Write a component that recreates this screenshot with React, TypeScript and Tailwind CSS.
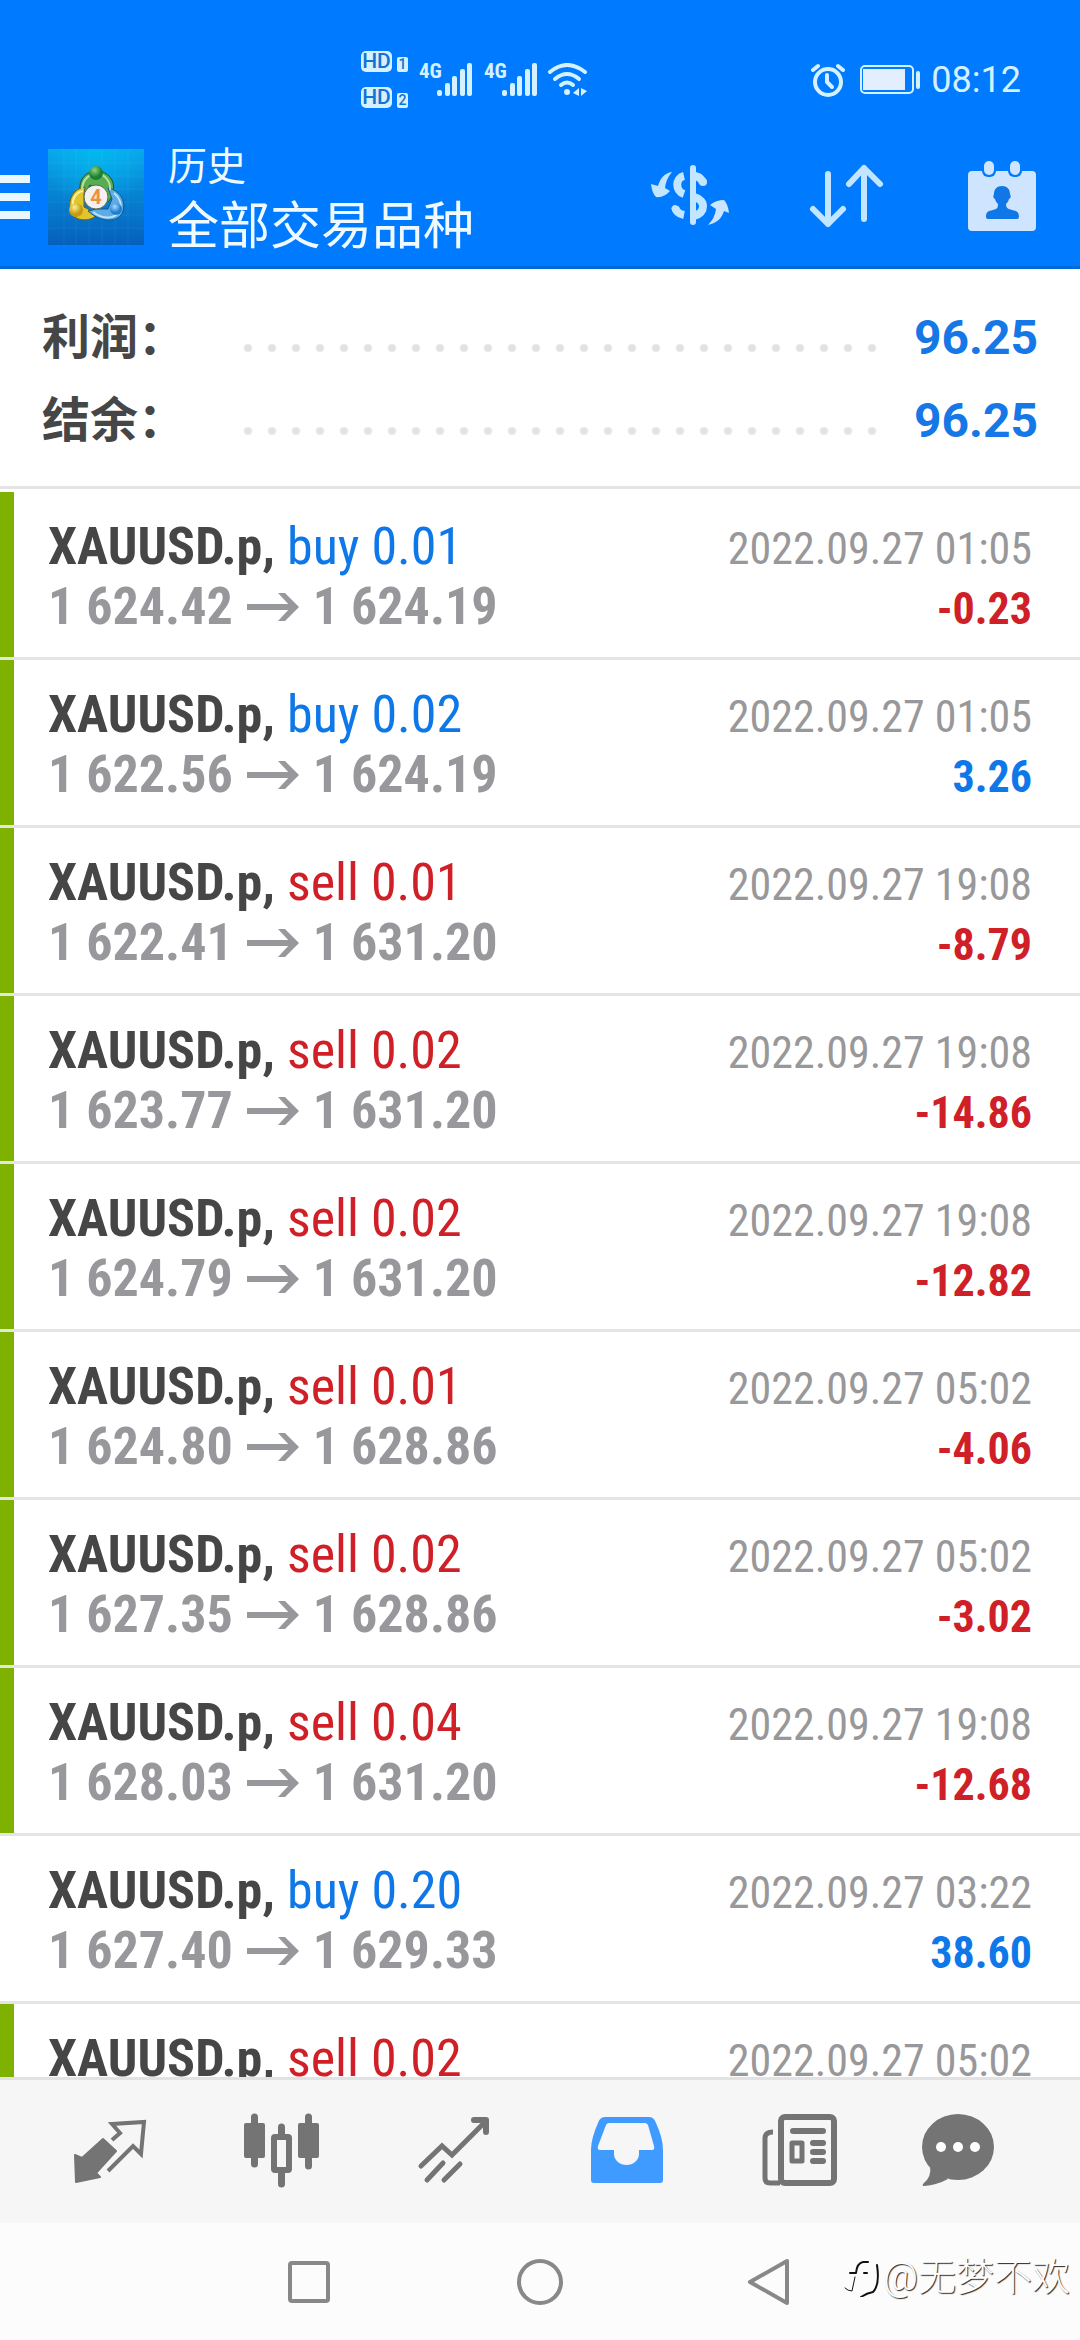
import React from 'react';

interface Deal {
  symbol: string;
  side: 'buy' | 'sell';
  volume: string;
  open: string;
  close: string;
  time: string;
  profit: string;
  marked: boolean;
}

const deals: Deal[] = [
  { symbol: 'XAUUSD.p', side: 'buy', volume: '0.01', open: '1 624.42', close: '1 624.19', time: '2022.09.27 01:05', profit: '-0.23', marked: true },
  { symbol: 'XAUUSD.p', side: 'buy', volume: '0.02', open: '1 622.56', close: '1 624.19', time: '2022.09.27 01:05', profit: '3.26', marked: true },
  { symbol: 'XAUUSD.p', side: 'sell', volume: '0.01', open: '1 622.41', close: '1 631.20', time: '2022.09.27 19:08', profit: '-8.79', marked: true },
  { symbol: 'XAUUSD.p', side: 'sell', volume: '0.02', open: '1 623.77', close: '1 631.20', time: '2022.09.27 19:08', profit: '-14.86', marked: true },
  { symbol: 'XAUUSD.p', side: 'sell', volume: '0.02', open: '1 624.79', close: '1 631.20', time: '2022.09.27 19:08', profit: '-12.82', marked: true },
  { symbol: 'XAUUSD.p', side: 'sell', volume: '0.01', open: '1 624.80', close: '1 628.86', time: '2022.09.27 05:02', profit: '-4.06', marked: true },
  { symbol: 'XAUUSD.p', side: 'sell', volume: '0.02', open: '1 627.35', close: '1 628.86', time: '2022.09.27 05:02', profit: '-3.02', marked: true },
  { symbol: 'XAUUSD.p', side: 'sell', volume: '0.04', open: '1 628.03', close: '1 631.20', time: '2022.09.27 19:08', profit: '-12.68', marked: true },
  { symbol: 'XAUUSD.p', side: 'buy', volume: '0.20', open: '1 627.40', close: '1 629.33', time: '2022.09.27 03:22', profit: '38.60', marked: false },
  { symbol: 'XAUUSD.p', side: 'sell', volume: '0.02', open: '1 627.35', close: '1 628.86', time: '2022.09.27 05:02', profit: '-3.02', marked: true },
];

const summary = [
  { label: '利润', value: '96.25' },
  { label: '结余', value: '96.25' },
];

export default function App() {
  return (
    <div className="h-screen flex flex-col bg-white font-['Roboto','Noto_Sans_CJK_SC',sans-serif]">
      <header className="shrink-0 bg-[#007aff] border-b-3 border-[#0069dc]">
        <StatusBar />
        <TitleBar />
      </header>

      <main className="flex-1 min-h-0 overflow-hidden">
        {/* 汇总 */}
        <dl className="h-[220px] pt-[27px] border-b-3 border-[#e4e4e4] mb-[3px]">
          {summary.map(item => (
            <div key={item.label} className="flex items-center h-[83px] px-[42px] text-[48px] leading-[83px] font-bold">
              <dt className="w-[194px] text-[#464646]">{item.label}：</dt>
              <dd className="flex-1 flex items-center justify-between text-[#1677e6]">
                <span className="w-[648px] h-2 mt-5 bg-[radial-gradient(circle,#e2e2e2_3px,transparent_5px)] bg-[length:24px_8px]" />
                {item.value}
              </dd>
            </div>
          ))}
        </dl>

        {/* 成交列表 */}
        <ul>
          {deals.map((deal, i) => (
            <DealRow key={i} deal={deal} />
          ))}
        </ul>
      </main>

      <TabBar />
      <SystemNav />
    </div>
  );
}

function StatusBar() {
  return (
    <div className="flex items-center justify-between pt-[51px] pl-[361px] pr-[59px] text-[#d5f1ff]">
      <div className="flex items-center">
        <div className="flex flex-col gap-[15px]">
          <HdBadge slot="1" />
          <HdBadge slot="2" />
        </div>
        <Signal />
        <Signal />
        <svg className="w-10 h-[34px] ml-[10px]" viewBox="0 0 40 34" fill="none" stroke="currentColor" strokeLinecap="round">
          <path d="M2 9Q19 -5 37 9" strokeWidth="4" />
          <path d="M7 16Q19 6 31 16" strokeWidth="4" />
          <path d="M13 22Q19 17 25 22" strokeWidth="4" />
          <circle cx="19" cy="29" r="3" fill="currentColor" stroke="none" />
          <path d="M31 25V33L25 30ZM33 25V33L39 28Z" fill="currentColor" stroke="none" />
        </svg>
      </div>
      <div className="flex items-center">
        <svg className="w-[34px] h-[34px]" viewBox="0 0 34 34" fill="none" stroke="currentColor" strokeLinecap="round">
          <circle cx="17" cy="19" r="13" strokeWidth="4" />
          <path d="M16 12V19L21 24" strokeWidth="4" strokeLinejoin="round" />
          <path d="M2 7L7 3M27 3L32 7" strokeWidth="4" />
        </svg>
        <svg className="w-[60px] h-[30px] ml-[15px]" viewBox="0 0 60 30" fill="none">
          <rect x="1" y="1" width="52" height="27" rx="4" stroke="currentColor" strokeWidth="2" />
          <rect x="3" y="4" width="42" height="21" fill="#e3efff" />
          <rect x="56" y="6" width="4" height="18" rx="2" fill="currentColor" />
        </svg>
        <span className="ml-[11px] text-[36px] leading-[40px]">08:12</span>
      </div>
    </div>
  );
}

function HdBadge({ slot }: { slot: string }) {
  return (
    <div className="flex items-end gap-[5px] font-medium text-[#1272d8]">
      <span className="w-[31px] h-[21px] rounded-[5px] bg-[#d5f1ff] text-center text-[21px] leading-[21px]">HD</span>
      <span className="w-[11px] h-[15px] rounded-[2px] bg-[#d5f1ff] text-center text-[14px] leading-[15px]">{slot}</span>
    </div>
  );
}

function Signal() {
  return (
    <div className="flex items-start w-[54px] ml-[11px]">
      <span className="w-[18px] font-['Roboto_Condensed','Roboto',sans-serif] font-bold text-[21px] leading-4">4G</span>
      <svg className="w-[36px] h-[34px]" viewBox="0 0 36 34" fill="currentColor">
        <rect x="0" y="27" width="5" height="6" rx="2" />
        <rect x="8" y="20" width="5" height="13" rx="2" />
        <rect x="15" y="13" width="5" height="20" rx="2" />
        <rect x="23" y="6" width="5" height="27" rx="2" />
        <rect x="30" y="0" width="5" height="33" rx="2" />
      </svg>
    </div>
  );
}

function TitleBar() {
  return (
    <div className="flex items-center pt-[41px] pb-[21px] text-[#eefaff]">
      <button aria-label="菜单" className="flex flex-col gap-[10px] w-[30px] mr-[18px]">
        <span className="w-full h-2 bg-[#e9f8ff]" />
        <span className="w-full h-2 bg-[#e9f8ff]" />
        <span className="w-full h-2 bg-[#e9f8ff]" />
      </button>
      <AppLogo />
      <div className="ml-6 h-24 flex-1 flex flex-col">
        <h2 className="text-[39px] leading-[36px]">历史</h2>
        <h1 className="text-[51px] leading-[84px]">全部交易品种</h1>
      </div>
      <button aria-label="币种" className="w-[156px] flex justify-center">
        <svg className="w-24 h-24" viewBox="0 0 96 96" fill="none" stroke="#c2e6ff" strokeWidth="8">
          <path d="M51 19V73" strokeWidth="6" strokeLinecap="round" />
          <path d="M42 27C33 29 33 42 42 45" />
          <path d="M33 58C34 63 37 65 42 66" />
          <circle cx="33" cy="59" r="3" fill="#c2e6ff" stroke="none" />
          <path d="M53 27C58 28 60 30 61 34" />
          <circle cx="61" cy="33" r="4" fill="#c2e6ff" stroke="none" />
          <path d="M52 48C64 51 64 63 52 67" />
          <path d="M30 23C22 24 18 30 16 37L9 35Q10 44 14 48Q22 49 28 42L23 39Q24 30 30 23Z" fill="#c2e6ff" stroke="none" />
          <path d="M66 76C75 74 80 69 82 62L87 64Q86 55 82 51Q74 51 68 56L74 60Q73 69 66 76Z" fill="#cbe4ff" stroke="none" />
        </svg>
      </button>
      <button aria-label="排序" className="w-[156px] flex justify-center">
        <svg className="w-24 h-24" viewBox="0 0 96 96" fill="none" stroke="#c2e6ff" strokeWidth="6" strokeLinecap="round" strokeLinejoin="round">
          <path d="M30 25V75M15 60L30 75L45 60" />
          <path d="M66 70V19M51 35L66 19L82 35" />
        </svg>
      </button>
      <button aria-label="周期" className="w-[156px] flex justify-center">
        <svg className="w-24 h-24" viewBox="0 0 96 96" fill="#cfe5ff">
          <rect x="14" y="22" width="68" height="60" rx="4" />
          <rect x="28" y="9" width="14" height="19" rx="6" fill="#007aff" />
          <rect x="54" y="9" width="14" height="19" rx="6" fill="#007aff" />
          <rect x="30" y="12" width="10" height="14" rx="5" />
          <rect x="56" y="12" width="10" height="14" rx="5" />
          <path
            d="M48 37C53 37 56 40 56 45C57 47 57 49 55 50C54 53 53 54 52 55C52 59 54 60 58 61C63 62 65 63 65 68Q65 70 63 70H34Q32 70 32 68C32 63 34 62 39 61C43 60 44 59 44 55C43 54 42 53 41 50C39 49 39 47 40 45C40 40 43 37 48 37Z"
            fill="#0f77e6"
          />
        </svg>
      </button>
    </div>
  );
}

function AppLogo() {
  return (
    <svg className="w-24 h-24" viewBox="0 0 96 96">
      <defs>
        <linearGradient id="sky" x1="0" y1="0" x2="0" y2="1">
          <stop offset="0" stopColor="#0aa5ea" />
          <stop offset="0.5" stopColor="#0681d2" />
          <stop offset="1" stopColor="#0560bd" />
        </linearGradient>
        <radialGradient id="glow" cx="0.5" cy="0" r="0.6">
          <stop offset="0" stopColor="#00bdf2" stopOpacity="0.8" />
          <stop offset="1" stopColor="#00bdf2" stopOpacity="0" />
        </radialGradient>
        <radialGradient id="green" cx="0.4" cy="0.3">
          <stop offset="0" stopColor="#8fd67c" />
          <stop offset="1" stopColor="#1c7f33" />
        </radialGradient>
        <radialGradient id="yellow" cx="0.4" cy="0.3">
          <stop offset="0" stopColor="#fff08a" />
          <stop offset="1" stopColor="#c39a10" />
        </radialGradient>
        <radialGradient id="blue" cx="0.4" cy="0.3">
          <stop offset="0" stopColor="#a6dbff" />
          <stop offset="1" stopColor="#1d7fd0" />
        </radialGradient>
      </defs>
      <rect width="96" height="96" fill="url(#sky)" />
      <rect width="96" height="96" fill="url(#glow)" />
      <path
        d="M16 0V96M28 0V96M41 0V96M54 0V96M67 0V96M80 0V96M0 14H96M0 27H96M0 40H96M0 53H96M0 66H96M0 79H96"
        stroke="#fff"
        strokeOpacity="0.06"
      />
      <g stroke="#20541f" strokeWidth="1">
        <path d="M32 44C30 30 38 22 49 22C60 22 68 32 65 43C64 48 62 51 60 53L54 40L42 36L36 45Z" fill="#58ad52" />
        <path d="M37 38C26 39 20 50 22 61C24 70 36 74 47 68L44 62L36 58L36 45Z" fill="#e0c52c" stroke="#6b6113" />
        <path d="M60 39C71 41 78 51 75 62C72 73 54 75 40 62L48 60L60 60L64 50Z" fill="#5eace3" stroke="#17568c" />
      </g>
      <path d="M34 40C35 29 42 25 49 25C57 25 63 33 62 41" fill="none" stroke="#b4e3a3" strokeWidth="2" />
      <path d="M35 42C28 43 24 50 25 56" fill="none" stroke="#faf0a0" strokeWidth="2" />
      <path d="M66 44C72 49 74 56 72 62C66 71 54 70 45 63" fill="none" stroke="#bce3ff" strokeWidth="2" />
      <circle cx="48" cy="24" r="7" fill="url(#green)" />
      <circle cx="28" cy="61" r="7" fill="url(#yellow)" />
      <circle cx="68" cy="60" r="6" fill="url(#blue)" />
      <circle cx="48" cy="48" r="12" fill="#f4f0f2" stroke="#5a6a55" strokeWidth="1" />
      <text x="48" y="55" textAnchor="middle" fontSize="20" fontWeight="700" fill="#f0913a">
        4
      </text>
    </svg>
  );
}

function DealRow({ deal }: { deal: Deal }) {
  const loss = deal.profit.startsWith('-');

  return (
    <li className="flex h-[168px] border-b-3 border-[#e4e4e4] font-['Roboto_Condensed','Roboto',sans-serif]">
      <div className={`w-[14px] shrink-0 ${deal.marked ? 'bg-[#7eb100]' : 'bg-white'}`} />
      <div className="flex-1 pl-[34px] pr-12 pt-[26px]">
        <div className="flex items-baseline justify-between text-[52px] leading-[58px]">
          <p>
            <span className="font-bold text-[#464646]">{deal.symbol}, </span>
            <span className={deal.side === 'buy' ? 'text-[#0f78e8]' : 'text-[#cf2027]'}>
              {deal.side} {deal.volume}
            </span>
          </p>
          <time className="text-[44px] text-[#98989a]">{deal.time}</time>
        </div>
        <div className="flex items-baseline justify-between text-[52px] leading-[58px] font-bold">
          <p className="flex items-center gap-[14px] text-[#98989c]">
            {deal.open}
            <svg className="w-[52px] h-7" viewBox="0 0 52 28" fill="none" stroke="currentColor">
              <path d="M0 14H48" strokeWidth="6" />
              <path d="M31 0H38L52 14L38 28H31L44 14Z" fill="currentColor" stroke="none" />
            </svg>
            {deal.close}
          </p>
          <span className={`text-[44px] ${loss ? 'text-[#cf2027]' : 'text-[#0f78e8]'}`}>{deal.profit}</span>
        </div>
      </div>
    </li>
  );
}

function TabBar() {
  return (
    <nav className="shrink-0 flex h-[146px] px-6 border-t-3 border-[#e2e2e4] bg-[#f6f6f6] text-[#747474]">
      <Tab label="行情">
        <path d="M13 51L20 54L41 35L54 47L34 69L38 73L14 78Z" fill="currentColor" stroke="currentColor" strokeWidth="2" strokeLinejoin="round" />
        <path d="M50 36L58 29L50 20L82 18L79 50L71 42L46 67" fill="none" stroke="currentColor" strokeWidth="4" />
      </Tab>
      <Tab label="图表">
        <path d="M20.500 13V60M74.500 13V62M47.500 23V32M47.500 67V80" stroke="currentColor" strokeWidth="7" strokeLinecap="round" />
        <rect x="10" y="19" width="21" height="35" rx="2" fill="currentColor" />
        <rect x="64" y="19" width="21" height="35" rx="2" fill="currentColor" />
        <rect x="40" y="33" width="15" height="33" rx="1" fill="none" stroke="currentColor" strokeWidth="6" />
      </Tab>
      <Tab label="交易">
        <g fill="none" stroke="currentColor" strokeWidth="5" strokeLinecap="round">
          <path d="M15 62L36 42L46 51L80 17" />
          <path d="M68 16H80V28" strokeWidth="6" strokeLinejoin="round" />
          <path d="M21 76L37 59M38 76L54 60" />
        </g>
      </Tab>
      <Tab label="历史" active>
        <path
          fillRule="evenodd"
          fill="currentColor"
          d="M27 13H71C75 13 77 16 78 19C82 28 85 37 85 46V76Q85 79 82 79H16Q13 79 13 76V46C13 37 16 28 20 19C21 16 23 13 27 13ZM31 19Q29 19 28 21L20 42Q19 46 22 46H36V50A12.500 11 0 0 0 61 50V46H74Q77 46 76 42L70 21Q69 19 67 19Z"
        />
      </Tab>
      <Tab label="新闻">
        <rect x="31" y="13" width="53" height="66" rx="4" fill="none" stroke="currentColor" strokeWidth="6" />
        <path d="M23 28Q15 28 15 34V74Q15 79 20 79H30" fill="none" stroke="currentColor" strokeWidth="5" />
        <rect x="40" y="24" width="36" height="6" rx="3" fill="currentColor" />
        <rect x="42" y="39" width="10" height="18" fill="none" stroke="currentColor" strokeWidth="5" strokeLinejoin="round" />
        <rect x="60" y="36" width="16" height="6" rx="3" fill="currentColor" />
        <rect x="60" y="45" width="16" height="6" rx="3" fill="currentColor" />
        <rect x="60" y="54" width="16" height="6" rx="3" fill="currentColor" />
      </Tab>
      <Tab label="消息">
        <ellipse cx="36" cy="43" rx="36" ry="33" fill="currentColor" />
        <path d="M8 62Q10 73 1 80Q0 82 2 82Q15 81 26 75Z" fill="currentColor" />
        <circle cx="19" cy="43" r="5" fill="#fff" />
        <circle cx="36" cy="43" r="5" fill="#fff" />
        <circle cx="53" cy="43" r="5" fill="#fff" />
      </Tab>
    </nav>
  );
}

function Tab({ label, active, children }: { label: string; active?: boolean; children: React.ReactNode }) {
  return (
    <button aria-label={label} className={`flex-1 flex items-center justify-center ${active ? 'text-[#3f9bff]' : ''}`}>
      <svg className="w-24 h-24" viewBox="0 0 96 96">
        {children}
      </svg>
    </button>
  );
}

function SystemNav() {
  return (
    <div className="relative shrink-0 flex justify-center h-[117px] bg-[#fcfcfc] text-[#888]">
      <button aria-label="最近任务" className="w-[230px] flex items-center justify-center">
        <svg className="w-12 h-12" viewBox="0 0 48 48" fill="none" stroke="currentColor" strokeWidth="4">
          <rect x="4" y="5" width="38" height="38" rx="2" />
        </svg>
      </button>
      <button aria-label="主屏幕" className="w-[230px] flex items-center justify-center">
        <svg className="w-12 h-12" viewBox="0 0 48 48" fill="none" stroke="currentColor" strokeWidth="4">
          <circle cx="24" cy="24" r="21" />
        </svg>
      </button>
      <button aria-label="返回" className="w-[230px] flex items-center justify-center">
        <svg className="w-12 h-12" viewBox="0 0 48 48" fill="none" stroke="currentColor" strokeWidth="4" strokeLinejoin="round">
          <path d="M41 3V45L4 24Z" />
        </svg>
      </button>

      {/* 水印 */}
      <div className="absolute right-[10px] top-[30px] flex items-center gap-1 text-white">
        <svg className="w-9 h-10" viewBox="0 0 36 40" fill="none" stroke="#111" strokeWidth="2" strokeLinecap="round">
          <path d="M7 16H13M13 16Q14 6 20 5H25" />
          <path d="M12 20L9 34Q5 34 2 31" strokeWidth="1" />
          <path d="M34 8Q37 28 30 35Q24 36 18 40" />
          <path d="M21 16H24" />
        </svg>
        <span className="text-[38px] leading-[48px] font-light [text-shadow:1px_1px_1px_#222]">@无梦不欢</span>
      </div>
    </div>
  );
}
